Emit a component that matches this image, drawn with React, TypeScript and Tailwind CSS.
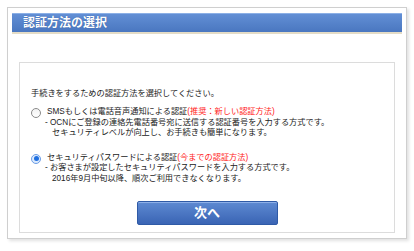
import React from 'react';

const jp = { fontFamily: '"Liberation Sans", "Noto Sans CJK JP", sans-serif' };

function Radio({ checked }: { checked?: boolean }) {
  if (checked) {
    return (
      <span className="mt-[1px] flex h-[10px] w-[10px] shrink-0 items-center justify-center rounded-full border border-[#6d9ee6] bg-[#dceafc]">
        <span className="h-[5px] w-[5px] rounded-full bg-[#1f6fe0]" />
      </span>
    );
  }
  return (
    <span className="mt-[1px] h-[10px] w-[10px] shrink-0 rounded-full border border-[#8a8a8a] bg-gradient-to-b from-[#f2f2f2] to-white" />
  );
}

function Option({
  checked,
  title,
  note,
  lines,
}: {
  checked?: boolean;
  title: string;
  note: string;
  lines: [string, string];
}) {
  return (
    <div className="flex gap-[6px]">
      <Radio checked={checked} />
      <div className="text-[8.2px] leading-[10.5px] text-[#222]">
        <p>
          {title}
          <span className="text-[#ff1a1a]">{note}</span>
        </p>
        <p className="-ml-[2px]">{lines[0]}</p>
        <p className="ml-[5px]">{lines[1]}</p>
      </div>
    </div>
  );
}

export default function App() {
  return (
    <div className="h-[251px] w-[414px] bg-white pl-[7px] pt-[7px]" style={jp}>
      <div className="w-[400px] border border-[#cfcfcf] bg-white px-[4px] pb-[5px] pt-[5px] shadow-[2px_2px_3px_rgba(0,0,0,0.12)]">
        <div className="flex h-[21px] items-center border-b-2 border-[#e4dcc6] bg-gradient-to-b from-[#6390d6] to-[#4a77c0] pl-[11px] shadow-[inset_0_1px_0_#8cb0e6]">
          <h1 className="text-[12px] font-bold text-white [text-shadow:0_0_1px_#2f5596]">認証方法の選択</h1>
        </div>

        <div className="mx-[7px] mt-[28px] border border-[#dcdcdc] px-[11px] pb-[7px] pt-[25px]">
          <p className="text-[8.2px] leading-[11px] text-[#222]">手続きをするための認証方法を選択してください。</p>

          <div className="mt-[8px] flex flex-col gap-[14px]">
            <Option
              title="SMSもしくは電話音声通知による認証"
              note="(推奨：新しい認証方法)"
              lines={[
                '- OCNにご登録の連絡先電話番号宛に送信する認証番号を入力する方式です。',
                'セキュリティレベルが向上し、お手続きも簡単になります。',
              ]}
            />
            <Option
              checked
              title="セキュリティパスワードによる認証"
              note="(今までの認証方法)"
              lines={[
                '- お客さまが設定したセキュリティパスワードを入力する方式です。',
                '2016年9月中旬以降、順次ご利用できなくなります。',
              ]}
            />
          </div>

          <div className="mt-[17px] flex justify-center">
            <button className="h-[24px] w-[141px] rounded-[2px] border border-[#2f5aa6] bg-gradient-to-b from-[#5e8ad2] to-[#3a64b4] text-[13px] font-bold text-white shadow-[inset_0_1px_0_#8eb0e8]">
              次へ
            </button>
          </div>
        </div>
      </div>
    </div>
  );
}
